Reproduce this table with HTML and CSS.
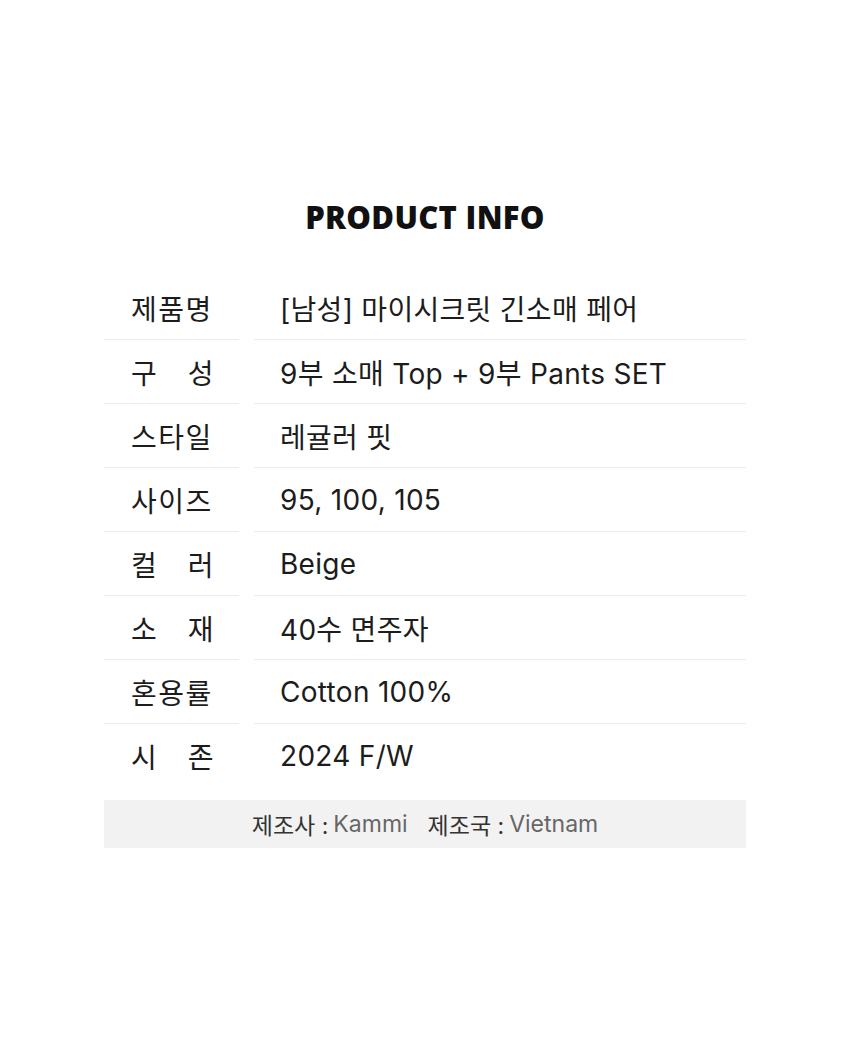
FILE: index.html
```html
<!DOCTYPE html>
<html lang="ko">

<head>
  <meta charset="UTF-8">
  <meta name="viewport" content="width=device-width, initial-scale=1.0">
  <title>Product Info</title>
  <link rel="stylesheet" href="styles.css">
</head>

<body>
  <div class="info">
    <h1 class="info-title">PRODUCT INFO</h1>
    <div class="info-table">
      <div class="info-row">
        <div class="info-label"><span>제품명</span></div>
        <div class="info-value">[남성] 마이시크릿 긴소매 페어</div>
      </div>
      <div class="info-row">
        <div class="info-label"><span>구 성</span></div>
        <div class="info-value">9부 소매 Top + 9부 Pants SET</div>
      </div>
      <div class="info-row">
        <div class="info-label"><span>스타일</span></div>
        <div class="info-value">레귤러 핏</div>
      </div>
      <div class="info-row">
        <div class="info-label"><span>사이즈</span></div>
        <div class="info-value">95, 100, 105</div>
      </div>
      <div class="info-row">
        <div class="info-label"><span>컬 러</span></div>
        <div class="info-value">Beige</div>
      </div>
      <div class="info-row">
        <div class="info-label"><span>소 재</span></div>
        <div class="info-value">40수 면주자</div>
      </div>
      <div class="info-row">
        <div class="info-label"><span>혼용률</span></div>
        <div class="info-value">Cotton 100%</div>
      </div>
      <div class="info-row">
        <div class="info-label"><span>시 존</span></div>
        <div class="info-value">2024 F/W</div>
      </div>
    </div>
    <div class="info-maker">
      <span class="maker-key">제조사 :</span> <span class="maker-val">Kammi</span>
      <span class="maker-key maker-gap">제조국 :</span> <span class="maker-val">Vietnam</span>
    </div>
  </div>
</body>

</html>
```

FILE: styles.css
```css
body {
  margin: 0;
  background: #fff;
  font-family: Inter, "Noto Sans CJK KR", sans-serif;
  color: #1c1c1c;
}

.info {
  width: 642px;
  margin: 0 auto;
  padding-top: 196px;
}

.info-title {
  margin: 0 0 38px;
  font-family: "Open Sans", sans-serif;
  font-weight: 800;
  font-size: 31px;
  line-height: 42px;
  letter-spacing: 0.3px;
  text-align: center;
  color: #111;
}

.info-row {
  display: grid;
  grid-template-columns: 135px 1fr;
  column-gap: 15px;
}

.info-label,
.info-value {
  height: 63px;
  border-bottom: 1px solid #ececec;
  display: flex;
  align-items: center;
  font-size: 28px;
}

.info-row:last-child .info-label,
.info-row:last-child .info-value {
  border-bottom: none;
}

.info-label {
  padding-left: 27px;
}

.info-label span {
  display: inline-block;
  width: 84px;
  letter-spacing: 1.5px;
  text-align: justify;
  text-align-last: justify;
}

.info-value {
  padding-left: 26px;
  letter-spacing: 0.3px;
}

.info-maker {
  margin-top: 13px;
  height: 48px;
  background: #f2f2f2;
  display: flex;
  align-items: center;
  justify-content: center;
  font-size: 23px;
}

.maker-key {
  color: #333;
}

.maker-val {
  color: #666;
  margin-left: 5px;
}

.maker-gap {
  margin-left: 20px;
}
```
